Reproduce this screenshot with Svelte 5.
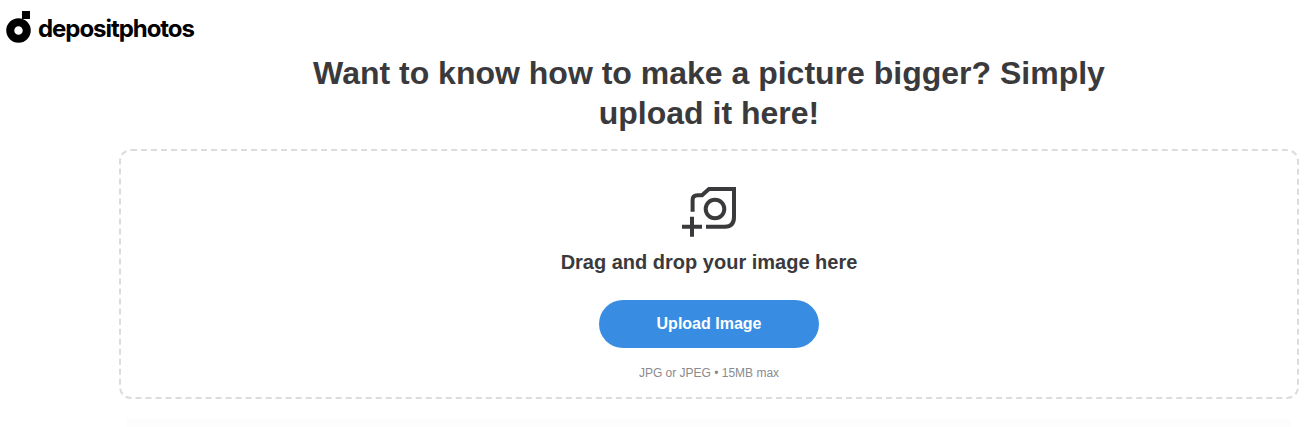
<script>
	let title = 'Want to know how to make a picture bigger? Simply upload it here!';
</script>

<div class="page">
	<header class="header">
		<svg class="logo-mark" width="25" height="32" viewBox="0 0 25 32" aria-hidden="true">
			<rect x="16" y="0" width="8" height="8" fill="#000" />
			<circle cx="12.500" cy="19.500" r="8.250" fill="none" stroke="#000" stroke-width="8" />
		</svg>
		<span class="logo-text">depositphotos</span>
	</header>

	<main class="main">
		<h1 class="title">{title}</h1>
		<section class="dropzone">
			<svg class="camera" width="60" height="54" viewBox="0 0 60 54" aria-hidden="true">
				<g fill="none" stroke="#3a3a3c" stroke-width="4">
					<path d="M13.600 25.700V14Q13.600 9.300 18.500 9.300H23L30 3H55V31Q55 40.700 46 40.700H27" />
					<circle cx="36" cy="23" r="9.300" />
					<path d="M3 40.700H23M13 30.700V50.700" />
				</g>
			</svg>
			<p class="hint">Drag and drop your image here</p>
			<button class="upload" type="button">Upload Image</button>
			<p class="note">JPG or JPEG • 15MB max</p>
		</section>
		<div class="shade"></div>
	</main>
</div>

<style>
	:global(body) {
		margin: 0;
		background: #fff;
		overflow: hidden;
	}

	.page {
		height: 427px;
		overflow: hidden;
		font-family: 'Liberation Sans', Arial, sans-serif;
	}

	.header {
		display: flex;
		align-items: flex-start;
		gap: 7px;
		height: 53px;
		padding: 11px 0 0 6px;
		box-sizing: border-box;
	}

	.logo-text {
		margin-top: 3px;
		font-family: Inter, sans-serif;
		font-weight: 700;
		font-size: 24px;
		line-height: 30px;
		letter-spacing: -1.05px;
		color: #000;
	}

	.main {
		margin-left: 119px;
		width: 1180px;
	}

	.title {
		width: 820px;
		margin: 0 auto;
		height: 96px;
		font-size: 32px;
		line-height: 40px;
		font-weight: 700;
		color: #3a3a3c;
		text-align: center;
	}

	.dropzone {
		display: flex;
		flex-direction: column;
		align-items: center;
		box-sizing: border-box;
		height: 250px;
		padding-top: 35px;
		border: 2px dashed #dcdcdc;
		border-radius: 12px;
	}

	.hint {
		margin: 10px 0 0;
		font-size: 20px;
		line-height: 24px;
		font-weight: 700;
		color: #3a3a3c;
	}

	.upload {
		width: 220px;
		height: 48px;
		margin-top: 26px;
		border: 0;
		border-radius: 24px;
		background: #388de3;
		color: #fff;
		font-family: inherit;
		font-size: 16px;
		font-weight: 700;
	}

	.note {
		margin: 17px 0 0;
		font-size: 12px;
		line-height: 16px;
		color: #8a8a8c;
	}

	.shade {
		height: 12px;
		margin: 20px 8px 0;
		background: linear-gradient(#fcfcfc, #fdfdfd);
	}
</style>
